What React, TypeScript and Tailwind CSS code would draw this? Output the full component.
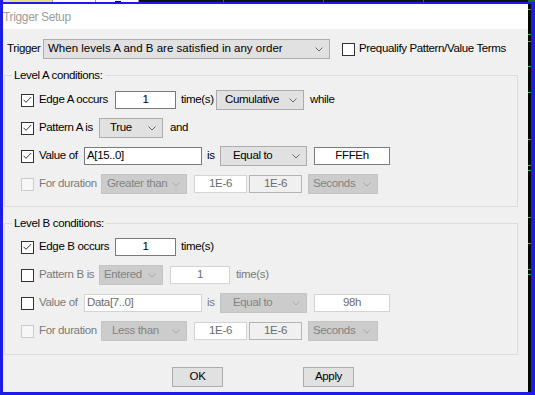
import React from 'react';

type CheckState = 'on' | 'off' | 'dis';

const Check: React.FC<{ state: CheckState }> = ({ state }) => (
  <span
    className={`w-[13px] h-[13px] shrink-0 border flex items-center justify-center ${
      state === 'dis' ? 'border-[#cccccc] bg-[#f7f7f7]' : 'border-[#333333] bg-white'
    }`}
  >
    {state === 'on' && (
      <svg width="11" height="11" viewBox="0 0 11 11">
        <path d="M1.5 4.8 L4 7.3 L9.2 2" fill="none" stroke="#333" strokeWidth="1" />
      </svg>
    )}
  </span>
);

const Combo: React.FC<{ value: string; w: string; pl: string; dis?: boolean; wide?: boolean }> = ({
  value,
  w,
  pl,
  dis,
  wide,
}) => (
  <div
    className={`h-[20px] ${w} ${pl} shrink-0 border flex items-center justify-between pr-[6px] ${
      dis ? 'bg-[#cccccc] border-[#c4c4c4] text-[#838383]' : 'bg-[#e1e1e1] border-[#adadad] text-black'
    }`}
  >
    <span className={`whitespace-nowrap ${wide ? 'tracking-normal' : ''}`}>{value}</span>
    <svg width="8" height="5" viewBox="0 0 8 5">
      <path d="M0.5 0.5 L4 4 L7.5 0.5" fill="none" stroke={dis ? '#a8a8a8' : '#6a6a6a'} strokeWidth="1" />
    </svg>
  </div>
);

type BoxKind = 'on' | 'light' | 'grey';

const Box: React.FC<{ value: string; w: string; kind: BoxKind; left?: boolean }> = ({ value, w, kind, left }) => {
  const look =
    kind === 'on'
      ? 'bg-white border-[#7a7a7a] text-black'
      : kind === 'light'
      ? 'bg-white border-[#d4d4d4] text-[#6d6d6d]'
      : 'bg-[#f0f0f0] border-[#b4b4b4] text-[#6d6d6d]';
  return (
    <div
      className={`h-[18px] ${w} shrink-0 border flex items-center whitespace-nowrap ${look} ${
        left ? 'justify-start pl-[2px]' : 'justify-center'
      }`}
    >
      {value}
    </div>
  );
};

const Row: React.FC<{ children: React.ReactNode }> = ({ children }) => (
  <div className="h-[20px] flex items-center">{children}</div>
);

const Label: React.FC<{ text: string; w: string; grey?: boolean }> = ({ text, w, grey }) => (
  <span className={`${w} ml-[5px] shrink-0 whitespace-nowrap ${grey ? 'text-[#7a7a7a]' : 'text-black'}`}>{text}</span>
);

const Group: React.FC<{ title: string; extra: string; inner: string; children: React.ReactNode }> = ({
  title,
  extra,
  inner,
  children,
}) => (
  <fieldset className={`ml-[1px] w-[514px] border border-[#dcdcdc] ${extra}`}>
    <legend className="ml-[7px] px-[2px] leading-[16px]">{title}</legend>
    <div className={`pl-[16px] flex flex-col gap-[8px] ${inner}`}>{children}</div>
  </fieldset>
);

// green tick marks on the chart behind the dialog
const ticks = [5, 30, 37, 62, 88, 135, 161, 166, 213, 239, 265, 270];

const App: React.FC = () => {
  return (
    <div className="w-[535px] h-[395px] overflow-hidden bg-[#1c1ce6] flex flex-col font-['Liberation_Sans',Arial,sans-serif] text-[11.5px] tracking-[-0.35px] text-black">
      {/* strip of the window behind */}
      <div className="h-[2px] flex shrink-0">
        <div className="w-[3px]" />
        <div className="w-[6px] bg-[#d8d8d8]" />
        <div className="w-[43px] bg-[#e6e27a]" />
        <div className="w-[43px] bg-white border-l border-[#9a9a9a]" />
        <div className="w-[43px] bg-white border-l border-[#9a9a9a] flex items-end">
          <div className="ml-[19px] w-[6px] h-[1px] bg-black" />
        </div>
        <div className="w-[85px] bg-[#0a140a] border-l border-[#9a9a9a]" />
        <div className="w-[100px] bg-[#0a140a] border-l border-[#5a5a5a]" />
        <div className="w-[100px] bg-[#0a140a] border-l border-[#5a5a5a]" />
        <div className="w-[105px] bg-[#0a140a] border-l border-[#5a5a5a]" />
        <div className="flex-1 bg-[#1e6a1e]" />
      </div>

      <div className="mt-[2px] h-[388px] flex">
        <div className="w-[3px] shrink-0" />

        {/* dialog */}
        <div className="w-[525px] h-[388px] flex flex-col overflow-hidden">
          <div className="h-[25px] bg-white flex items-center shrink-0">
            <span className="text-[12px] text-[#9c9c9c] whitespace-nowrap">Trigger Setup</span>
          </div>

          <div className="flex-1 bg-[#f0f0f0] pt-[10px]">
            {/* trigger row */}
            <div className="h-[20px] flex items-center pl-[4px]">
              <span className="w-[36px] shrink-0">Trigger</span>
              <Combo value="When levels A and B are satisfied in any order" w="w-[287px]" pl="pl-[4px]" wide />
              <span className="ml-[12px]">
                <Check state="off" />
              </span>
              <span className="ml-[4px] whitespace-nowrap">Prequalify Pattern/Value Terms</span>
            </div>

            <Group title="Level A conditions:" extra="mt-[8px]" inner="pt-[7px] pb-[12px]">
              <Row>
                <Check state="on" />
                <Label text="Edge A occurs" w="w-[76px]" />
                <Box value="1" w="w-[61px]" kind="on" />
                <span className="ml-[5px] w-[35px] shrink-0">time(s)</span>
                <Combo value="Cumulative" w="w-[88px]" pl="pl-[8px]" />
                <span className="ml-[6px]">while</span>
              </Row>
              <Row>
                <Check state="on" />
                <Label text="Pattern A is" w="w-[60px]" />
                <Combo value="True" w="w-[64px]" pl="pl-[10px]" />
                <span className="ml-[7px]">and</span>
              </Row>
              <Row>
                <Check state="on" />
                <Label text="Value of" w="w-[45px]" />
                <Box value="A[15..0]" w="w-[118px]" kind="on" left />
                <span className="ml-[5px] w-[13px] shrink-0">is</span>
                <Combo value="Equal to" w="w-[87px]" pl="pl-[12px]" />
                <span className="ml-[7px]">
                  <Box value="FFFEh" w="w-[76px]" kind="on" />
                </span>
              </Row>
              <Row>
                <Check state="dis" />
                <Label text="For duration" w="w-[62px]" grey />
                <Combo value="Greater than" w="w-[86px]" pl="pl-[5px]" dis />
                <span className="ml-[7px]">
                  <Box value="1E-6" w="w-[53px]" kind="light" />
                </span>
                <span className="ml-[2px]">
                  <Box value="1E-6" w="w-[53px]" kind="grey" />
                </span>
                <span className="ml-[6px]">
                  <Combo value="Seconds" w="w-[70px]" pl="pl-[4px]" dis />
                </span>
              </Row>
            </Group>

            <Group title="Level B conditions:" extra="mt-[8px]" inner="pt-[6px] pb-[13px]">
              <Row>
                <Check state="on" />
                <Label text="Edge B occurs" w="w-[76px]" />
                <Box value="1" w="w-[61px]" kind="on" />
                <span className="ml-[5px]">time(s)</span>
              </Row>
              <Row>
                <Check state="off" />
                <Label text="Pattern B is" w="w-[60px]" grey />
                <Combo value="Entered" w="w-[64px]" pl="pl-[4px]" dis />
                <span className="ml-[7px]">
                  <Box value="1" w="w-[60px]" kind="light" />
                </span>
                <span className="ml-[6px] text-[#7a7a7a]">time(s)</span>
              </Row>
              <Row>
                <Check state="off" />
                <Label text="Value of" w="w-[45px]" grey />
                <Box value="Data[7..0]" w="w-[118px]" kind="light" left />
                <span className="ml-[5px] w-[13px] shrink-0 text-[#7a7a7a]">is</span>
                <Combo value="Equal to" w="w-[87px]" pl="pl-[12px]" dis />
                <span className="ml-[7px]">
                  <Box value="98h" w="w-[76px]" kind="light" />
                </span>
              </Row>
              <Row>
                <Check state="dis" />
                <Label text="For duration" w="w-[62px]" grey />
                <Combo value="Less than" w="w-[86px]" pl="pl-[10px]" dis />
                <span className="ml-[7px]">
                  <Box value="1E-6" w="w-[53px]" kind="light" />
                </span>
                <span className="ml-[2px]">
                  <Box value="1E-6" w="w-[53px]" kind="grey" />
                </span>
                <span className="ml-[6px]">
                  <Combo value="Seconds" w="w-[70px]" pl="pl-[4px]" dis />
                </span>
              </Row>
            </Group>

            {/* buttons */}
            <div className="mt-[12px] flex gap-[80px] pl-[169px]">
              {['OK', 'Apply'].map((b) => (
                <button
                  key={b}
                  className="w-[51px] h-[20px] bg-[#e1e1e1] border border-[#adadad] flex items-center justify-center"
                >
                  {b}
                </button>
              ))}
            </div>
          </div>
        </div>

        {/* chart edge behind the dialog */}
        <svg width="3" height="388" className="shrink-0 bg-[#050805]">
          {ticks.map((y) => (
            <line key={y} x1="0" x2="3" y1={y + 0.5} y2={y + 0.5} stroke="#2fbf3a" strokeWidth="1" />
          ))}
        </svg>
      </div>
    </div>
  );
};

export default App;
